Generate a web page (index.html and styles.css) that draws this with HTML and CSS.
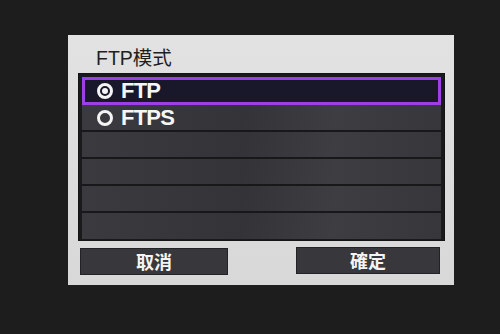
FILE: index.html
```html
<!DOCTYPE html>
<html lang="zh">
<head>
<meta charset="utf-8">
<link rel="stylesheet" href="styles.css">
</head>
<body>
<div class="panel">
  <div class="title">FTP模式</div>
  <div class="list">
    <div class="row selected"><span class="radio on"></span><span class="label">FTP</span></div>
    <div class="row"><span class="radio"></span><span class="label">FTPS</span></div>
    <div class="row"></div>
    <div class="row"></div>
    <div class="row"></div>
    <div class="row last"></div>
  </div>
  <div class="buttons">
    <div class="btn btn-cancel">取消</div>
    <div class="btn btn-ok">確定</div>
  </div>
</div>
</body>
</html>
```

FILE: styles.css
```css
html, body {
  margin: 0;
  padding: 0;
  background: #1d1d1d;
  width: 500px;
  height: 334px;
  overflow: hidden;
}
body {
  font-family: "Liberation Sans", "Noto Sans CJK SC", sans-serif;
}
.panel {
  margin: 35px 0 0 68px;
  width: 386px;
  height: 250px;
  box-sizing: border-box;
  padding: 12px 0 0 10px;
  background: linear-gradient(180deg, #e2e2e2 0%, #d8d8d8 100%);
}
.title {
  font-size: 19.5px;
  line-height: 22px;
  height: 22px;
  color: #1f1f1f;
  padding-left: 18px;
  margin-bottom: 4px;
}
.list {
  width: 367px;
  height: 168px;
  box-sizing: border-box;
  border: 1px solid #141414;
  padding: 3px 3px 1px 3px;
  background: #1a1a1c;
  display: flex;
  flex-direction: column;
}
.row {
  height: 25px;
  border-bottom: 2px solid #18181a;
  background: linear-gradient(100deg, #3a3a3f 0%, #333338 45%, #3d3d42 70%, #36363b 100%);
  display: flex;
  align-items: center;
  padding-left: 15px;
}
.row.last {
  border-bottom: none;
  height: 26px;
}
.row.selected {
  height: 22px;
  border: 3px solid #9c40e6;
  background: #18182a;
  padding-left: 12px;
}
.radio {
  width: 10px;
  height: 10px;
  border: 3px solid #f4f4f4;
  border-radius: 50%;
  box-sizing: content-box;
  display: flex;
  align-items: center;
  justify-content: center;
  margin-right: 8px;
  flex: none;
}
.radio.on::after {
  content: "";
  width: 6px;
  height: 6px;
  border-radius: 50%;
  background: #f4f4f4;
}
.label {
  color: #f6f6f6;
  font-weight: bold;
  font-size: 22px;
  line-height: 22px;
  letter-spacing: -0.8px;
}
.buttons {
  display: flex;
  justify-content: space-between;
  padding: 0 14px 0 2px;
  margin-top: 6px;
}
.btn {
  height: 27px;
  box-sizing: border-box;
  background: #38383c;
  border: 1px solid #232325;
  color: #f4f4f4;
  font-family: "Noto Sans CJK SC", "Noto Sans CJK TC", sans-serif;
  font-weight: bold;
  font-size: 18px;
  line-height: 24px;
  text-align: center;
}
.btn-cancel {
  width: 148px;
  margin-top: 1px;
}
.btn-ok {
  width: 144px;
}
```
